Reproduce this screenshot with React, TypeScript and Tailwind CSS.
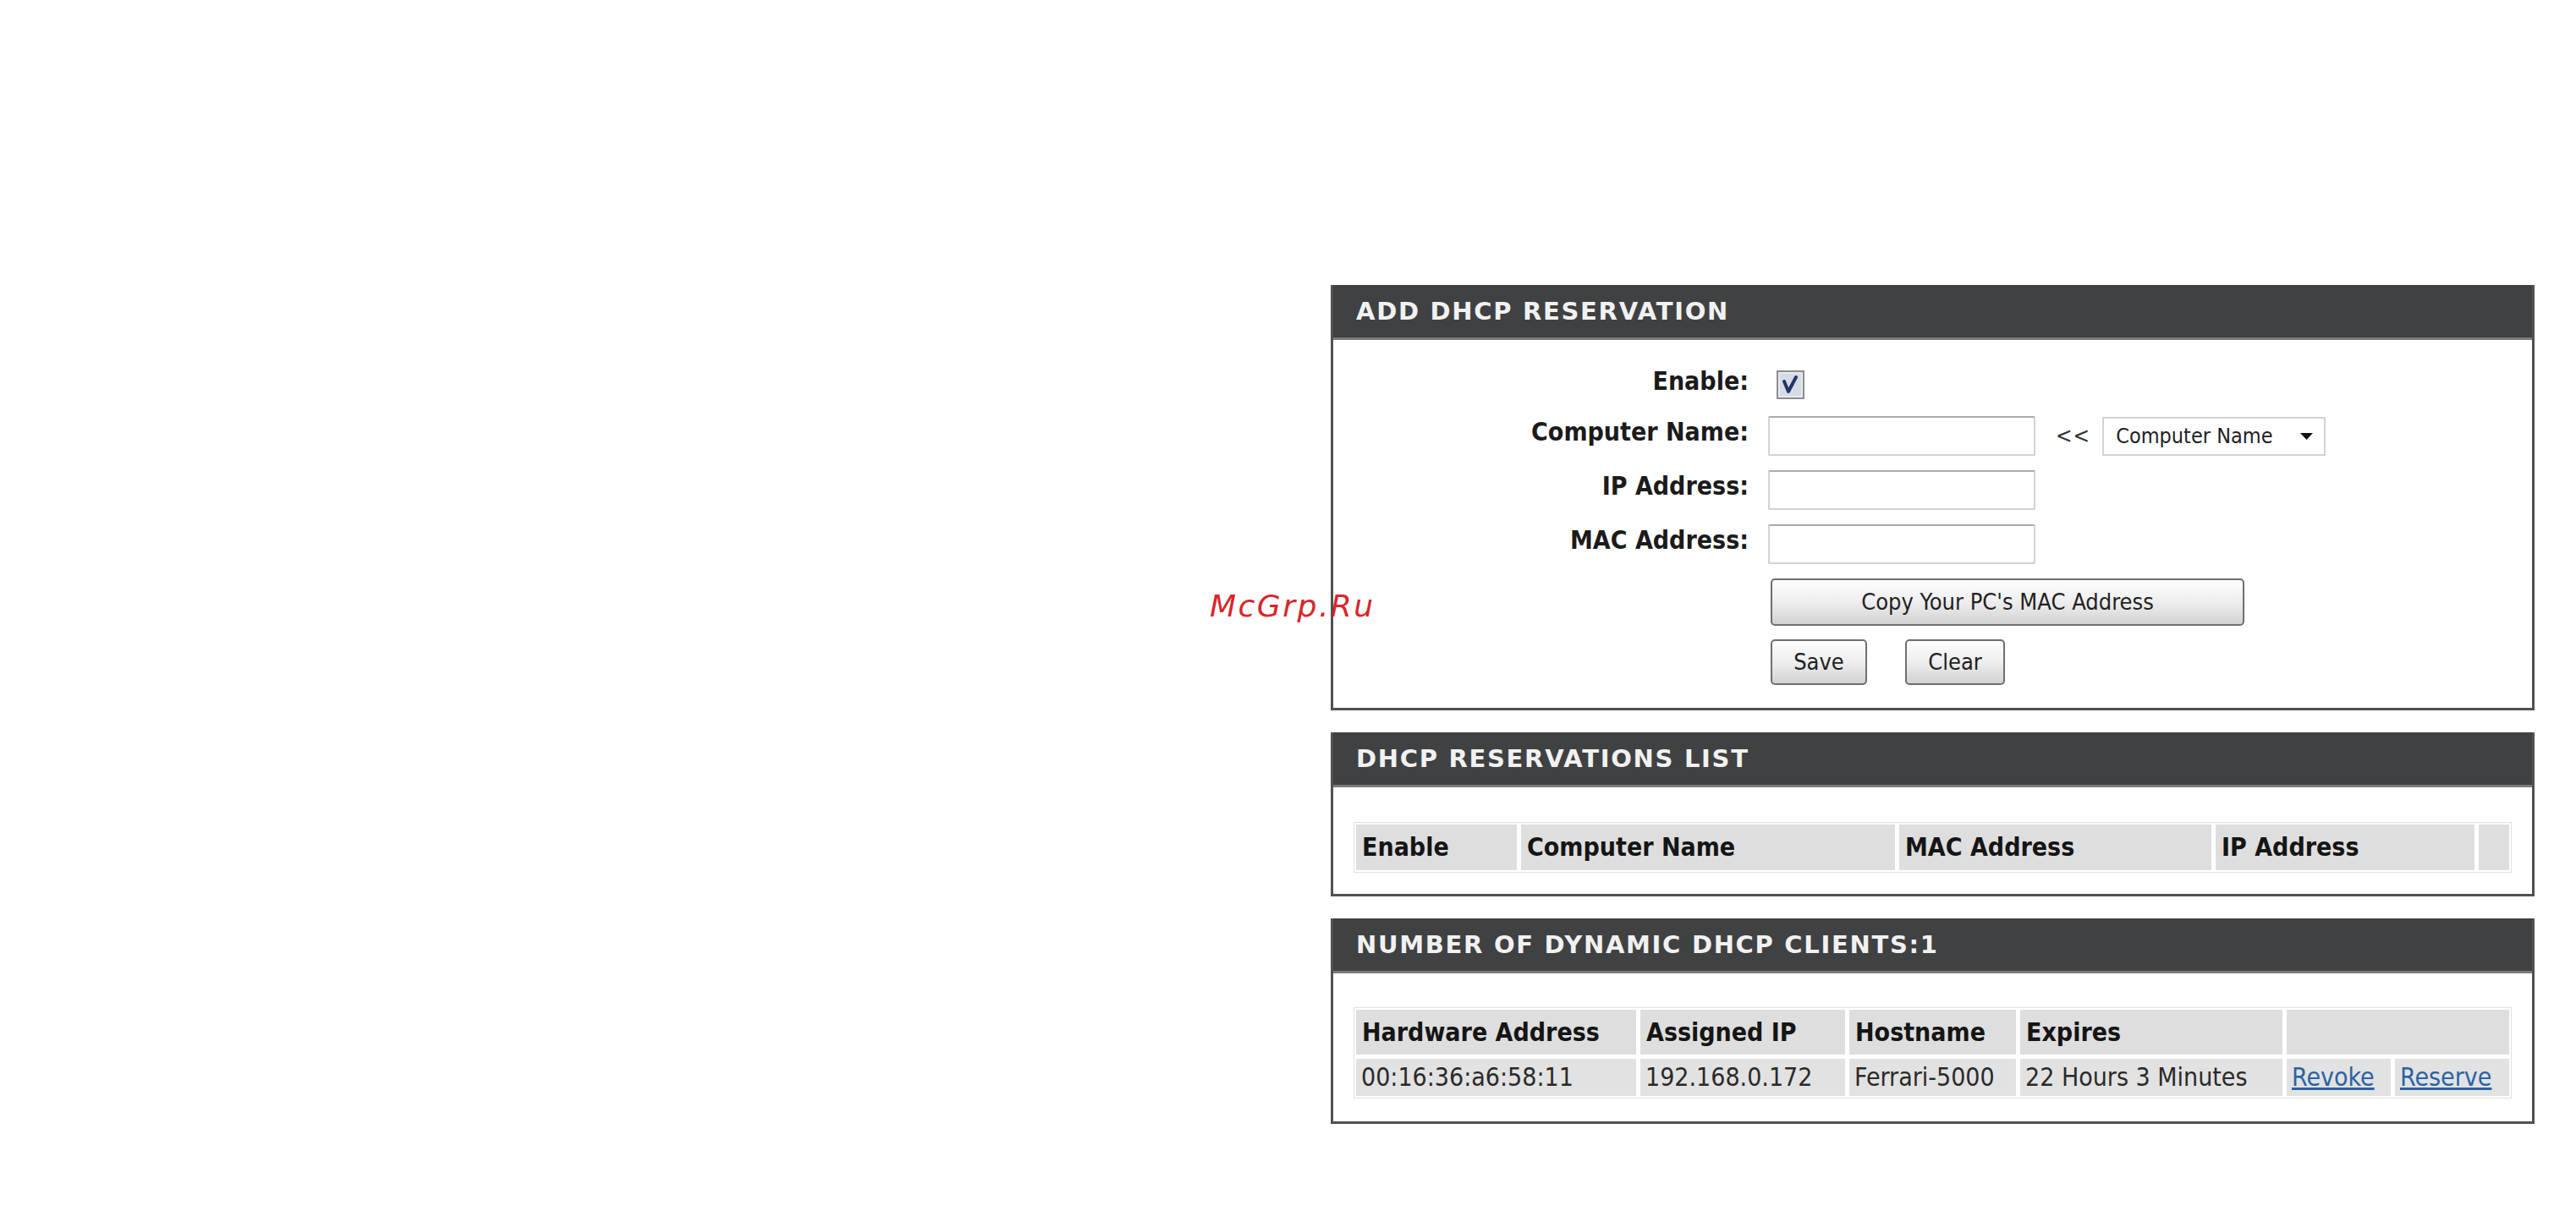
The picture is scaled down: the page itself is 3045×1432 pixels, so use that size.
import React from 'react';

const body = "font-['DejaVu_Sans_Condensed','DejaVu_Sans',sans-serif]";

const PanelHeader = ({ title }: { title: string }) => (
    <div className="h-[65px] bg-[#404142] border-b-[3px] border-[#7b7b7b] flex items-center pl-[27px]">
        <h2 className="font-['DejaVu_Sans',sans-serif] font-bold text-[29px] tracking-[1.7px] text-[#f1f1f1] leading-none">{title}</h2>
    </div>
);

const Panel = ({ title, bodyClass, children }: { title: string; bodyClass: string; children: React.ReactNode }) => (
    <section className="border-x-[3px] border-b-[3px] border-[#515151] bg-white">
        <PanelHeader title={title} />
        <div className={bodyClass}>{children}</div>
    </section>
);

const Label = ({ text }: { text: string }) => (
    <span className="w-[491px] shrink-0 text-right pb-[9px] font-bold text-[30px] leading-none text-[#1b1b1b]">{text}</span>
);

const TextBox = () => (
    <input type="text" className="w-[316px] h-[47px] border-2 border-[#d3d3d3] border-t-[#ababab] rounded-[2px] bg-white outline-none" />
);

const Button = ({ label, className }: { label: string; className: string }) => (
    <button className={`h-full rounded-[5px] border-2 border-[#6f6f6f] bg-linear-to-b from-[#fdfdfd] via-[#eeeeee] to-[#d2d2d2] text-[27px] text-[#222] ${className}`}>
        {label}
    </button>
);

const CheckBox = () => (
    <svg width="33" height="34" viewBox="0 0 33 34">
        <rect x="1" y="1" width="31" height="32" fill="#e6eaef" stroke="#8d8d8d" strokeWidth="2" />
        <rect x="4" y="4" width="25" height="26" fill="#d5dce6" />
        <path d="M9 13 L14 25 L23 8" fill="none" stroke="#243468" strokeWidth="4" strokeLinecap="round" strokeLinejoin="round" />
    </svg>
);

const headCell = "h-full bg-[#dedede] flex items-center pl-[7px] font-bold text-[30px] leading-none text-[#151515]";
const dataCell = "h-full bg-[#e2e2e2] flex items-center pl-[6px] text-[30px] leading-none text-[#2a2a2a]";

export default function App() {
    return (
        <div className={`relative w-[3045px] h-[1432px] bg-white overflow-hidden ${body}`}>
            <div className="ml-[1573px] pt-[337px] w-[1423px] flex flex-col gap-[26px]">

                <Panel title="ADD DHCP RESERVATION" bodyClass="pt-[36px] pb-[27px] flex flex-col">
                    <div className="flex items-center h-[34px]">
                        <Label text="Enable:" />
                        <div className="ml-[33px]"><CheckBox /></div>
                    </div>
                    <div className="flex items-center h-[47px] mt-[20px]">
                        <Label text="Computer Name:" />
                        <div className="ml-[23px] flex items-center">
                            <TextBox />
                            <span className="ml-[24px] text-[26px] text-[#333] tracking-[1px]">&lt;&lt;</span>
                            <div className="ml-[14px] w-[264px] h-[46px] border-2 border-[#d3d3d3] bg-white flex items-center justify-between pl-[14px] pr-[13px]">
                                <span className="text-[25px] text-[#222]">Computer Name</span>
                                <svg width="15" height="8" viewBox="0 0 15 8"><path d="M0 0H15L7.5 8Z" fill="#111" /></svg>
                            </div>
                        </div>
                    </div>
                    <div className="flex items-center h-[47px] mt-[17px]">
                        <Label text="IP Address:" />
                        <div className="ml-[23px]"><TextBox /></div>
                    </div>
                    <div className="flex items-center h-[47px] mt-[17px]">
                        <Label text="MAC Address:" />
                        <div className="ml-[23px]"><TextBox /></div>
                    </div>
                    <div className="flex h-[56px] mt-[17px] pl-[517px]">
                        <Button label="Copy Your PC's MAC Address" className="w-[560px]" />
                    </div>
                    <div className="flex h-[54px] mt-[16px] pl-[517px]">
                        <Button label="Save" className="w-[114px]" />
                        <Button label="Clear" className="w-[118px] ml-[45px]" />
                    </div>
                </Panel>

                <Panel title="DHCP RESERVATIONS LIST" bodyClass="pt-[41px] pb-[25px] px-[24px]">
                    <div className="border border-[#e0e0e0] p-[2px] grid grid-cols-[190px_442px_369px_306px_1fr] gap-x-[5px] h-[60px]">
                        <div className={headCell}>Enable</div>
                        <div className={headCell}>Computer Name</div>
                        <div className={headCell}>MAC Address</div>
                        <div className={headCell}>IP Address</div>
                        <div className="h-full bg-[#dedede]"></div>
                    </div>
                </Panel>

                <Panel title="NUMBER OF DYNAMIC DHCP CLIENTS:1" bodyClass="pt-[40px] pb-[27px] px-[24px]">
                    <div className="border border-[#e0e0e0] p-[2px] grid grid-cols-[331px_242px_197px_310px_123px_1fr] grid-rows-[53px_44px] gap-x-[5px] gap-y-[5px]">
                        <div className={headCell}>Hardware Address</div>
                        <div className={headCell}>Assigned IP</div>
                        <div className={headCell}>Hostname</div>
                        <div className={headCell}>Expires</div>
                        <div className="col-span-2 h-full bg-[#dedede]"></div>

                        <div className={dataCell}>00:16:36:a6:58:11</div>
                        <div className={dataCell}>192.168.0.172</div>
                        <div className={dataCell}>Ferrari-5000</div>
                        <div className={dataCell}>22 Hours 3 Minutes</div>
                        <div className={dataCell}><a href="#" className="text-[#2a63a6] underline">Revoke</a></div>
                        <div className={dataCell}><a href="#" className="text-[#2a63a6] underline">Reserve</a></div>
                    </div>
                </Panel>
            </div>

            <span className="absolute left-[1430px] top-[699px] z-10 font-['DejaVu_Sans',sans-serif] italic text-[36px] leading-none tracking-[2.5px] text-[#d8262b]">McGrp.Ru</span>
        </div>
    );
}
